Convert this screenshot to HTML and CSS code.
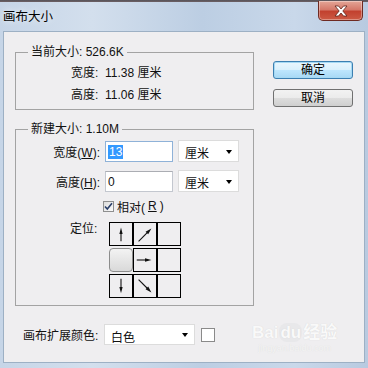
FILE: index.html
```html
<!DOCTYPE html>
<html lang="zh-CN">
<head>
  <meta charset="UTF-8" />
  <title>画布大小</title>
  <link rel="stylesheet" href="styles.css">
</head>
<body>
  <div class="window">
    <div class="titlebar">
      <span class="title">画布大小</span>
      <button class="close" type="button" aria-label="关闭">
        <svg width="16" height="12" viewBox="0 0 16 12">
          <path d="M2 1h3.5L8 4l2.5-3H14l-4.2 5L14 11h-3.5L8 8l-2.5 3H2l4.2-5z" fill="#fff" stroke="#5a1f17" stroke-width="0.8"/>
        </svg>
      </button>
    </div>

    <div class="client">
      <div class="main">
        <div class="groups">
          <fieldset class="group group-current">
            <legend>当前大小: 526.6K</legend>
            <div class="info-row">宽度:&nbsp; 11.38 厘米</div>
            <div class="info-row">高度:&nbsp; 11.06 厘米</div>
          </fieldset>

          <fieldset class="group group-new">
            <legend>新建大小: 1.10M</legend>
            <div class="size-form">
              <label>宽度(<u>W</u>):</label>
              <div class="textbox focused"><span class="selected-text">13</span></div>
              <div class="dropdown">厘米</div>

              <label>高度(<u>H</u>):</label>
              <div class="textbox">0</div>
              <div class="dropdown">厘米</div>
            </div>

            <label class="check">
              <span class="check-box">
                <svg width="9" height="9" viewBox="0 0 9 9">
                  <path d="M1 4.5l2.3 2.6L8 1.2" fill="none" stroke="#2a3f6a" stroke-width="1.6"/>
                </svg>
              </span>
              相对(<u>R</u>)
            </label>

            <div class="anchor-row">
              <span class="anchor-label">定位:</span>
              <div class="anchor">
                <div class="cell">
                  <svg viewBox="0 0 24 24"><line x1="12" y1="10" x2="12" y2="20"/><polygon points="12,5 10.2,12 13.8,12"/></svg>
                </div>
                <div class="cell">
                  <svg viewBox="0 0 24 24"><line x1="5" y1="20" x2="15" y2="10"/><polygon points="19,6 15.5,12.4 12.6,9.5"/></svg>
                </div>
                <div class="cell"></div>

                <div class="cell current"></div>
                <div class="cell">
                  <svg viewBox="0 0 24 24"><line x1="3" y1="12" x2="14" y2="12"/><polygon points="19,12 12,10.2 12,13.8"/></svg>
                </div>
                <div class="cell"></div>

                <div class="cell">
                  <svg viewBox="0 0 24 24"><line x1="12" y1="4" x2="12" y2="15"/><polygon points="12,20 10.2,13 13.8,13"/></svg>
                </div>
                <div class="cell">
                  <svg viewBox="0 0 24 24"><line x1="5" y1="5" x2="15" y2="15"/><polygon points="19,19 15.5,12.6 12.6,15.5"/></svg>
                </div>
                <div class="cell"></div>
              </div>
            </div>
          </fieldset>
        </div>

        <div class="buttons">
          <button class="btn btn-default" type="button">确定</button>
          <button class="btn" type="button">取消</button>
        </div>
      </div>

      <div class="ext-row">
        <span class="ext-label">画布扩展颜色:</span>
        <div class="dropdown wide">白色</div>
        <span class="swatch"></span>
      </div>

      <div class="watermark">
        <span class="wm-logo">Bai<span class="wm-du">du</span>经验</span>
        <span class="wm-url">jingyan.baidu.com</span>
      </div>
    </div>
  </div>
</body>
</html>
```

FILE: styles.css
```css
:root {
  --face: #efeef0;
  --text: #111;
  --line: #a3a3a3;
}

* {
  box-sizing: border-box;
}

body {
  margin: 0;
  width: 368px;
  height: 368px;
  overflow: hidden;
  font-family: 'Liberation Sans', 'Noto Sans CJK SC', sans-serif;
  font-size: 12px;
  color: var(--text);
}

u {
  text-decoration: underline;
  text-underline-offset: 1px;
}

/* window frame */
.window {
  width: 368px;
  height: 368px;
  display: flex;
  flex-direction: column;
  background:
    linear-gradient(to bottom, #55535a 0, #6e6064 2px, transparent 2px),
    linear-gradient(90deg, #c6d5e7 0%, #d3dfed 25%, #bccee3 55%, #c9d8ea 80%, #b8cae0 100%);
}

.titlebar {
  height: 31px;
  display: flex;
  justify-content: space-between;
  align-items: flex-start;
}

.title {
  margin-top: 10px;
  padding-left: 3px;
  line-height: 14px;
  font-size: 12.5px;
  color: #000;
  text-shadow: 0 0 6px rgba(255, 255, 255, 0.9);
}

.close {
  width: 45px;
  height: 20px;
  margin: 1px 5px 0 0;
  padding: 0;
  border: 1px solid #6e2a22;
  border-top: none;
  border-radius: 0 0 5px 5px;
  background: linear-gradient(to bottom, #e4a697 0%, #d5796a 45%, #c2412f 55%, #cc5a44 100%);
  box-shadow: inset 0 0 0 1px rgba(255, 255, 255, 0.35);
  display: flex;
  align-items: center;
  justify-content: center;
}

.client {
  flex: 1;
  margin: 0 3px 5px 3px;
  border: 1px solid #9db0c4;
  background: var(--face);
  position: relative;
}

.main {
  display: flex;
  padding: 12px 0 0 11px;
}

.groups {
  width: 239px;
}

/* group boxes */
.group {
  margin: 0;
  padding: 0;
  border: 1px solid var(--line);
  min-width: 0;
}

.group legend {
  margin-left: 12px;
  padding: 0 3px;
  line-height: 16px;
}

.group-current {
  padding: 2px 0 3px 0;
}

.info-row {
  padding-left: 55px;
  line-height: 22px;
}

.group-new {
  margin-top: 11px;
  padding: 3px 0 7px 0;
}

.size-form {
  display: grid;
  grid-template-columns: 84px 68px 61px;
  column-gap: 5px;
  row-gap: 8px;
  align-items: center;
}

.size-form label {
  text-align: right;
}

.textbox {
  height: 21px;
  border: 1px solid #c3c7cf;
  border-top-color: #abadb3;
  background: #fff;
  padding: 3px 0 0 2px;
  line-height: 14px;
}

.textbox.focused {
  border-color: #8fb2d8;
}

.selected-text {
  background: #3399ff;
  color: #fff;
  padding: 0 1px;
}

.dropdown {
  height: 22px;
  border: 1px solid #dcdcdc;
  background: #fff;
  display: flex;
  align-items: center;
  padding: 3px 0 0 6px;
}

.dropdown::after {
  content: '';
  margin-left: auto;
  margin-right: 6px;
  margin-top: -2px;
  border-top: 4px solid #000;
  border-left: 3.5px solid transparent;
  border-right: 3.5px solid transparent;
}

.check {
  margin-top: 7px;
  padding-left: 87px;
  height: 14px;
  display: flex;
  align-items: center;
  gap: 3px;
}

.check-box {
  width: 11px;
  height: 11px;
  border: 1px solid #8e8f8f;
  background: linear-gradient(135deg, #dcdcdc, #fbfbfb);
  display: flex;
  align-items: center;
  justify-content: center;
}

/* anchor grid */
.anchor-row {
  margin-top: 9px;
  display: flex;
}

.anchor-label {
  width: 93px;
  padding-left: 54px;
  line-height: 14px;
}

.anchor {
  display: grid;
  grid-template-columns: repeat(3, 24px);
  grid-template-rows: repeat(3, 24px);
  row-gap: 2px;
}

.cell {
  border: 1px solid #000;
  background: var(--face);
}

.cell svg {
  display: block;
  width: 22px;
  height: 22px;
}

.cell line {
  stroke: #111;
  stroke-width: 1.2;
}

.cell polygon {
  fill: #111;
}

.cell.current {
  border-color: #8c8c8c;
  border-radius: 4px;
  background: linear-gradient(to bottom, #f3f3f3, #d9d9d9);
}

/* buttons */
.buttons {
  margin-left: 19px;
  padding-top: 17px;
  display: flex;
  flex-direction: column;
  gap: 10px;
}

.btn {
  width: 80px;
  height: 18px;
  padding: 0;
  border: 1px solid #707070;
  border-radius: 3px;
  font-family: inherit;
  font-size: 12px;
  line-height: 14px;
  color: #000;
  background: linear-gradient(to bottom, #f2f2f2 0%, #ebebeb 50%, #dddddd 51%, #cfcfcf 100%);
}

.btn-default {
  border-color: #3c7fb1;
  box-shadow: inset 0 0 0 1px #a6d9f3;
  background: linear-gradient(to bottom, #eaf6fd 0%, #d9f0fc 50%, #bee6fd 51%, #a7d9f5 100%);
}

/* bottom row */
.ext-row {
  margin-top: 18px;
  padding-left: 19px;
  display: flex;
  align-items: center;
}

.ext-label {
  width: 81px;
}

.dropdown.wide {
  width: 91px;
  height: 21px;
  padding-left: 6px;
}

.swatch {
  width: 14px;
  height: 14px;
  margin-left: 6px;
  border: 1px solid #8a8a8a;
  background: #fff;
}

/* faint site watermark over the corner */
.watermark {
  position: absolute;
  left: 248px;
  top: 286px;
  display: flex;
  flex-direction: column;
  align-items: center;
  color: #f9f9f9;
  pointer-events: none;
}

.wm-logo {
  font-family: 'Liberation Sans', 'Noto Sans CJK SC', sans-serif;
  font-size: 17px;
  font-weight: bold;
  text-shadow: 0 0 1px #d2d2d2;
}

.wm-du {
  border-radius: 8px;
  background: #e8e8ea;
  padding: 0 1px;
  margin: 0 1px;
}

.wm-url {
  font-size: 9px;
  color: #f4f4f4;
  text-shadow: 0 0 1px #dadada;
}
```
